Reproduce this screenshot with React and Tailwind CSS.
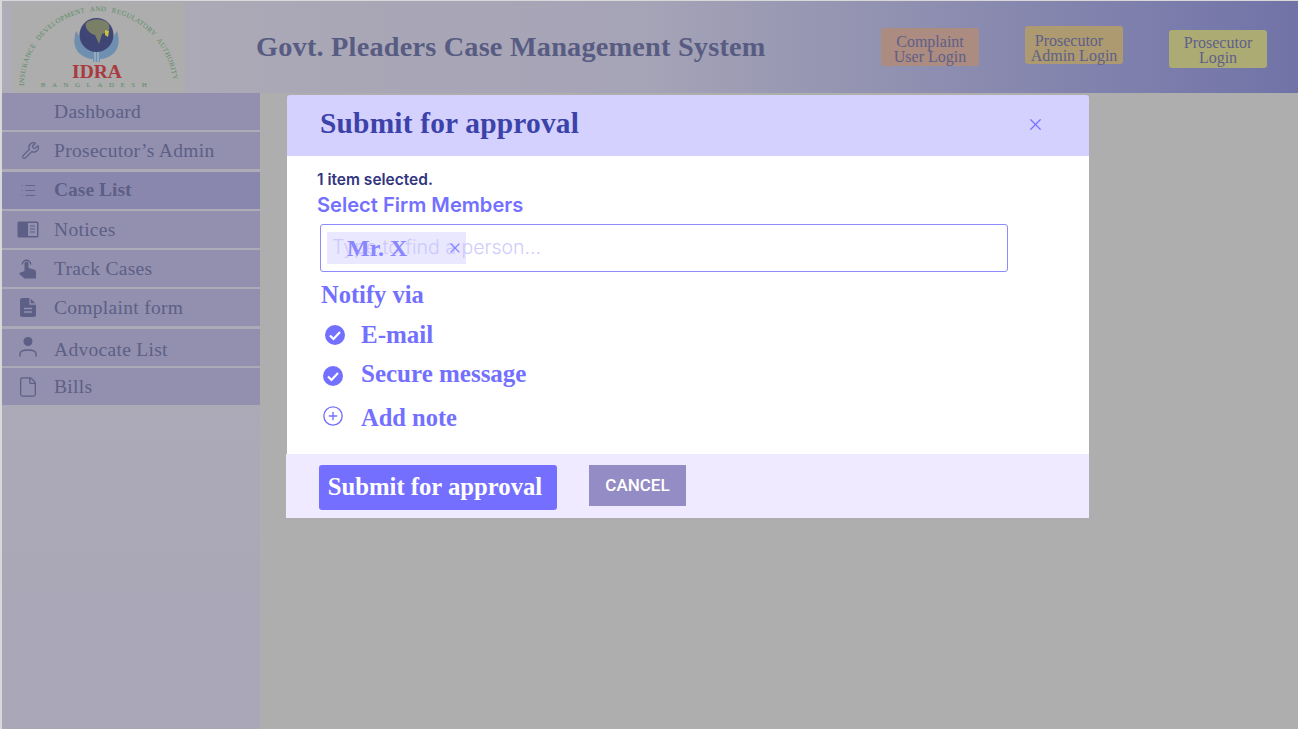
import { CirclePlus, File, List, Wrench, X } from 'lucide-react'

const serif = "font-['Liberation_Serif',serif]"

const NoticesIcon = () => (
  <svg width="22" height="17" viewBox="0 0 22 17">
    <rect x="0.5" y="0.5" width="21" height="16" rx="1.5" fill="#5d5f86" />
    <rect x="11" y="2" width="9" height="13" fill="#9290ae" />
    <path d="M13 5h5M13 8h5M13 11h5" stroke="#5d5f86" strokeWidth="1" />
  </svg>
)

const HandIcon = () => (
  <svg width="18" height="20" viewBox="0 0 18 20" fill="#5d5f86">
    <path d="M5.5 12V4.500a2 2 0 0 1 4 0V9l5.500 1.600c1.200.4 2 1.400 2 2.600V19.500H5.500L.8 15.600c-.7-.7-.3-2 .8-2.100z" />
    <path d="M3.300 5.500a4.200 4.200 0 0 1 8.400 0" fill="none" stroke="#5d5f86" strokeWidth="1.400" />
  </svg>
)

const FormIcon = () => (
  <svg width="16" height="19" viewBox="0 0 16 19">
    <path d="M2 0h8l6 6v11a2 2 0 0 1-2 2H2a2 2 0 0 1-2-2V2a2 2 0 0 1 2-2z" fill="#5d5f86" />
    <path d="M10 0v6h6M4 10.500h8M4 14h8" fill="none" stroke="#9290ae" strokeWidth="1.300" />
  </svg>
)

const PersonIcon = () => (
  <svg width="18" height="20" viewBox="0 0 18 20" fill="none">
    <circle cx="9" cy="4.500" r="4.500" fill="#5d5f86" />
    <path d="M1 19.500v-2.500c0-2.500 2.500-4 8-4s8 1.500 8 4v2.500" stroke="#5d5f86" strokeWidth="1.400" />
  </svg>
)

const CheckIcon = ({ className }) => (
  <svg width="20" height="20" viewBox="0 0 20 20" className={className}>
    <circle cx="10" cy="10" r="10" fill="#7470ff" />
    <path d="M5 10.500l3.500 3.500L15 7" fill="none" stroke="#ffffff" strokeWidth="2.200" />
  </svg>
)

const menu = [
  { label: 'Dashboard', icon: null },
  { label: 'Prosecutor’s Admin', icon: <Wrench size={19} strokeWidth={1.5} className="ml-[5px]" /> },
  { label: 'Case List', icon: <List size={17} strokeWidth={1.2} />, active: true },
  { label: 'Notices', icon: <NoticesIcon /> },
  { label: 'Track Cases', icon: <HandIcon /> },
  { label: 'Complaint form', icon: <FormIcon /> },
  { label: 'Advocate List', icon: <PersonIcon />, textClass: 'mt-[4px]' },
  { label: 'Bills', icon: <File size={22} strokeWidth={1.4} /> },
]

function Logo() {
  return (
    <div className="h-[91px] w-[173px] bg-[#adadad]">
      <svg width="173" height="91" viewBox="0 0 173 91">
        <defs>
          <path id="arc" d="M12 84 C 13 36, 52 9, 86 9 C 120 9, 159 36, 162 86" />
        </defs>
        <text fontFamily="Liberation Serif, serif" fontSize="7" fill="#5b8c63" letterSpacing="0.350" wordSpacing="3">
          <textPath href="#arc">INSURANCE DEVELOPMENT AND REGULATORY AUTHORITY</textPath>
        </text>
        <path d="M64 29c-3 9-2 18 4 23 5 4 10 5 13 5v3h7v-3c3 0 8-1 13-5 6-5 7-14 4-23l-5 8H69z" fill="#6f8fb0" />
        <path d="M83 48v12M86 48v12" stroke="#b8c4cc" strokeWidth="1" />
        <circle cx="84.500" cy="33" r="17" fill="#3f4575" />
        <path d="M74 21c6-5 16-5 22 0 3 5 1 9-3 10l-3 1-3 10-4-9c-5-1-11-7-9-12z" fill="#7a8068" />
        <path d="M93 28l4 1-1 6-3-2z" fill="#c9c23f" />
        <text x="85" y="76" textAnchor="middle" fontFamily="Liberation Serif, serif" fontWeight="700" fontSize="19.500" fill="#a93a3f">
          IDRA
        </text>
        <text x="85" y="84.500" textAnchor="middle" fontFamily="Liberation Serif, serif" fontSize="7" letterSpacing="6.500" fill="#5b8c63">
          BANGLADESH
        </text>
      </svg>
    </div>
  )
}

export default function App() {
  return (
    <div className={`flex h-screen w-full flex-col overflow-hidden border-t border-l-2 border-[#d8d8d8] bg-[#aeaeae] ${serif}`}>
      <header className="flex h-[92px] shrink-0 items-center bg-gradient-to-r from-[#aeacb6] via-[#a5a3b6] to-[#7173a8] pl-2.5">
        <Logo />
        <h1 className="ml-[71px] text-[28.300px] font-bold tracking-[0.2px] text-[#585c82]">Govt. Pleaders Case Management System</h1>
        <div className="ml-auto mr-[31px] flex items-start gap-[46px] text-center text-[16px] leading-[15px] text-[#5e6088]">
          <div className="mt-[2px] flex h-[38px] w-[98px] items-center justify-center rounded-[3px] bg-[#ac8b80] pt-[3px]">
            <span>Complaint<br />User Login</span>
          </div>
          <div className="flex h-[38px] w-[98px] items-center justify-center rounded-[3px] bg-[#ad9a70] pt-[5px]">
            <span><span className="mr-[10px]">Prosecutor</span><br />Admin Login</span>
          </div>
          <div className="mt-[4px] flex h-[38px] w-[98px] items-center justify-center rounded-[3px] bg-[#adab74] pt-[2px]">
            <span>Prosecutor<br />Login</span>
          </div>
        </div>
      </header>

      <div className="flex min-h-0 flex-1">
        <aside className="flex w-[258px] shrink-0 flex-col gap-[2.300px] bg-gradient-to-b from-[#aeacb6] to-[#a9a7b8]">
          {menu.map((item) => (
            <div
              key={item.label}
              className={`flex h-[37px] items-center text-[19.500px] text-[#5d5f86] ${item.active ? 'bg-[#8a87ae] font-bold' : 'bg-[#9290ae] tracking-[0.3px]'}`}
            >
              <span className="flex w-[52px] justify-center text-[#5d5f86]">{item.icon}</span>
              <span className={item.textClass}>{item.label}</span>
            </div>
          ))}
        </aside>

        <main className="min-w-0 flex-1 pl-[26px] pt-[2px]">
          <div className="w-[803px] text-[#7470ff]">
            <div className="ml-px flex h-[61px] items-center justify-between rounded-t-[3px] bg-[#d4d1ff] pl-[33px] pr-[44px]">
              <h2 className="-mt-[4px] text-[29.400px] font-bold tracking-[0.2px] text-[#3b42a8]">Submit for approval</h2>
              <X size={19} strokeWidth={1.500} className="-mt-[2px]" />
            </div>

            <div className="ml-px h-[298px] bg-white pl-[30px] pt-[15px]">
              <p className="font-['Inter',sans-serif] text-[15.500px] leading-[18px] font-semibold text-[#32357f]">1 item selected.</p>
              <p className="mt-[4px] font-['Inter',sans-serif] text-[20.100px] leading-[24px] font-semibold">Select Firm Members</p>

              <div className="relative mt-[7px] ml-[3px] flex h-[48px] w-[688px] items-center rounded-[3px] border border-[#8e8bff] pl-[11px] font-['Inter',sans-serif] text-[19.500px] font-light text-[#cfcdfb]">
                Type to find a person...
                <div className="absolute left-[6px] top-[7px] flex h-[32px] w-[139px] items-center justify-between bg-[#c9c5ff]/40 pl-[20px] pr-[3px] text-[#8a86ff]">
                  <span className={`text-[24px] font-bold ${serif}`}>Mr. X</span>
                  <X size={16} strokeWidth={1.800} />
                </div>
              </div>

              <p className="mt-[9px] ml-[4px] text-[24.500px] leading-[28px] font-bold">Notify via</p>
              <div className="mt-[12px] ml-[8px] flex h-[28px] items-center gap-[16px]">
                <CheckIcon />
                <span className="text-[25px] font-bold">E-mail</span>
              </div>
              <div className="mt-[11px] ml-[6px] flex h-[28px] items-center gap-[18px]">
                <CheckIcon className="mt-[3px]" />
                <span className="text-[25px] font-bold">Secure message</span>
              </div>
              <div className="mt-[16px] ml-[5px] flex h-[28px] items-center gap-[17px]">
                <CirclePlus size={22} strokeWidth={1.500} className="-mt-[4px]" />
                <span className="text-[24.500px] font-bold">Add note</span>
              </div>
            </div>

            <div className="flex h-[64px] items-start gap-[32px] bg-[#efeaff] pl-[33px] pt-[11px]">
              <button className="h-[45px] w-[238px] rounded-[3px] bg-[#746fff] pb-[2px] pr-[6px] text-[24.700px] font-bold text-white">Submit for approval</button>
              <button className="h-[41px] w-[97px] bg-[#948cc4] font-['Roboto',sans-serif] text-[17px] font-medium text-white">CANCEL</button>
            </div>
          </div>
        </main>
      </div>
    </div>
  )
}
